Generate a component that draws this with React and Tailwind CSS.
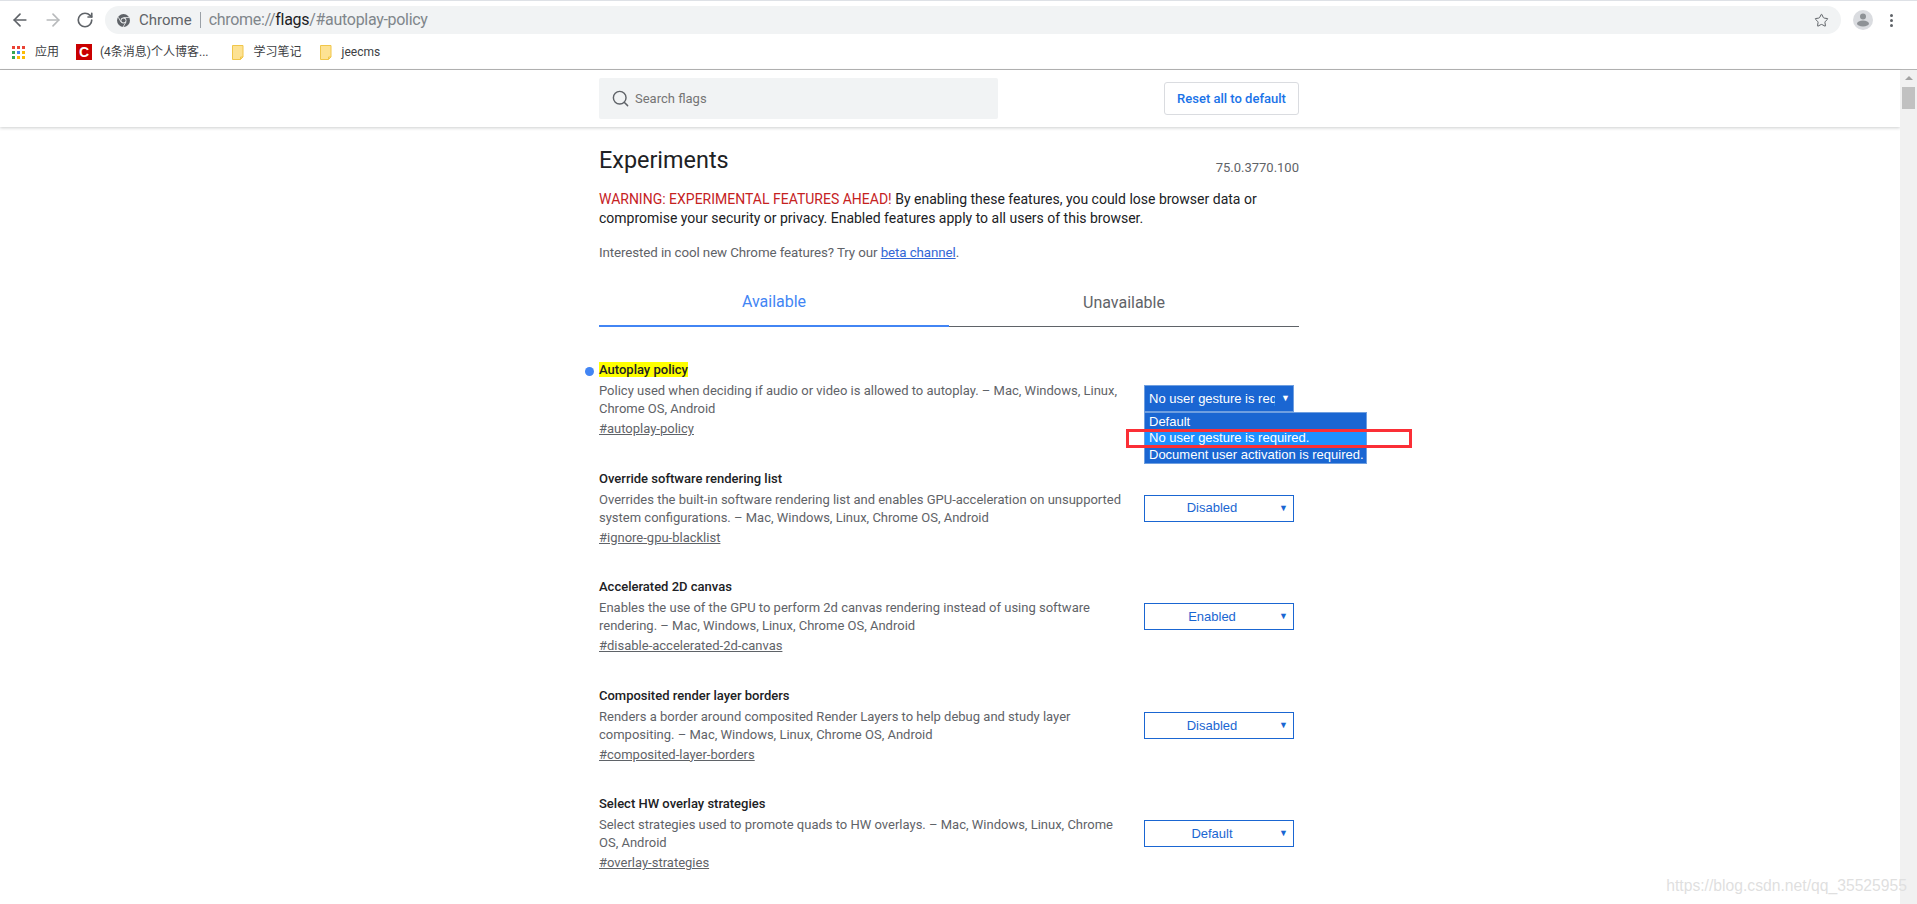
import React from "react";
import { ArrowLeft, ArrowRight, RotateCw, Star, Search } from "lucide-react";

const flags = [
  {
    title: "Autoplay policy",
    active: true,
    desc: ["Policy used when deciding if audio or video is allowed to autoplay. – Mac, Windows, Linux,", "Chrome OS, Android"],
    link: "#autoplay-policy",
    value: "No user gesture is required.",
  },
  {
    title: "Override software rendering list",
    desc: ["Overrides the built-in software rendering list and enables GPU-acceleration on unsupported", "system configurations. – Mac, Windows, Linux, Chrome OS, Android"],
    link: "#ignore-gpu-blacklist",
    value: "Disabled",
  },
  {
    title: "Accelerated 2D canvas",
    desc: ["Enables the use of the GPU to perform 2d canvas rendering instead of using software", "rendering. – Mac, Windows, Linux, Chrome OS, Android"],
    link: "#disable-accelerated-2d-canvas",
    value: "Enabled",
  },
  {
    title: "Composited render layer borders",
    desc: ["Renders a border around composited Render Layers to help debug and study layer", "compositing. – Mac, Windows, Linux, Chrome OS, Android"],
    link: "#composited-layer-borders",
    value: "Disabled",
  },
  {
    title: "Select HW overlay strategies",
    desc: ["Select strategies used to promote quads to HW overlays. – Mac, Windows, Linux, Chrome", "OS, Android"],
    link: "#overlay-strategies",
    value: "Default",
  },
];

function AppsIcon() {
  const colors = ["#ea4335", "#ea4335", "#ea4335", "#34a853", "#4285f4", "#fbbc05", "#34a853", "#fbbc05", "#fbbc05"];
  return (
    <div className="grid grid-cols-3 gap-[2px] w-[13px] h-[13px]">
      {colors.map((c, i) => (
        <span key={i} className="w-[3px] h-[3px]" style={{ background: c }} />
      ))}
    </div>
  );
}

function ChromeIcon() {
  return (
    <svg width="13" height="13" viewBox="0 0 16 16">
      <circle cx="8" cy="8" r="8" fill="#5f6368" />
      <circle cx="8" cy="8" r="3.6" fill="#f1f3f4" />
      <circle cx="8" cy="8" r="2.6" fill="#5f6368" />
      <path d="M8 4.4h7M5 10l-3.4-6M11 10l-3.5 6" stroke="#f1f3f4" strokeWidth="1" />
    </svg>
  );
}

function FolderIcon() {
  return (
    <svg width="12" height="15" viewBox="0 0 12 15">
      <path d="M.5.5h10.5v11.5l-2.5 2.5H.5z" fill="#fde293" stroke="#f0c64a" />
      <path d="M8.5 14.5V12H11" fill="none" stroke="#f0c64a" />
    </svg>
  );
}

function FlagSelect({ value, active }) {
  if (active) {
    return (
      <div className="relative w-[150px] h-[27px] bg-[#1a66d2] border border-[#6f9fe0] flex items-center pl-[4px] text-[13px] text-white font-['Liberation_Sans',sans-serif]">
        <span className="w-[126px] overflow-hidden whitespace-nowrap">{value}</span>
        <span className="ml-[6px] text-[9px]">▼</span>
        <div className="absolute left-[-1px] top-[26px] w-[223px] h-[52px] bg-[#1a66d2] border border-[#6f9fe0] flex flex-col pt-[1px] leading-[16px] whitespace-nowrap">
          <div className="h-[16px] pl-[4px]">Default</div>
          <div className="h-[18px] pl-[4px] bg-[#1e90ff]">No user gesture is required.</div>
          <div className="h-[16px] pl-[4px]">Document user activation is required.</div>
        </div>
        <div className="absolute left-[-19px] top-[43px] w-[286px] h-[19px] border-[3px] border-[#fb2f36]" />
      </div>
    );
  }
  return (
    <div className="relative w-[150px] h-[27px] bg-white border border-[#1a66d2] flex items-center justify-center pr-[14px] text-[13px] text-[#1a66d2] font-['Liberation_Sans',sans-serif]">
      {value}
      <span className="absolute right-[5px] top-[6px] text-[9px]">▼</span>
    </div>
  );
}

function FlagRow({ flag }) {
  return (
    <div className="relative flex justify-between h-[108.6px]">
      {flag.active && <span className="absolute left-[-14px] top-[6px] w-[9px] h-[9px] rounded-full bg-[#4285f4]" />}
      <div className="w-[545px]">
        <div className="h-[18px] leading-[18px] text-[13px] font-medium text-[#202124]">
          <span className={flag.active ? "bg-[#ffff00]" : ""}>{flag.title}</span>
        </div>
        <div className="mt-[3px] text-[13px] leading-[18px] text-[#5f6368] whitespace-nowrap">
          {flag.desc.map((line) => (
            <div key={line}>{line}</div>
          ))}
        </div>
        <div className="mt-[2px] text-[13px] leading-[18px] text-[#5f6368] underline">{flag.link}</div>
      </div>
      <div className={flag.active ? "mr-[5px] mt-[24px]" : "mr-[5px] mt-[25px]"}>
        <FlagSelect value={flag.value} active={flag.active} />
      </div>
    </div>
  );
}

export default function App() {
  return (
    <div className="relative h-screen flex flex-col overflow-hidden bg-white font-['Roboto','Noto_Sans_CJK_SC',sans-serif]">
      {/* browser toolbar */}
      <div className="h-[38px] pt-[5px] border-t border-[#dee1e6] flex items-start text-[#5f6368]">
        <div className="w-[105px] h-[28px] flex items-center pl-[10px] gap-[13px]">
          <ArrowLeft size={20} strokeWidth={2} />
          <ArrowRight size={20} strokeWidth={2} className="text-[#b8babc]" />
          <RotateCw size={18} strokeWidth={2.2} />
        </div>
        <div className="w-[1736px] h-[28px] rounded-full bg-[#f1f3f4] flex items-center pl-[12px] pr-[12px] text-[15px]">
          <ChromeIcon />
          <span className="ml-[9px] text-[#5f6368]">Chrome</span>
          <span className="mx-[8px] h-[16px] w-px bg-[#9aa0a6]" />
          <span className="text-[16px] tracking-[-0.3px] text-[#80868b]">
            chrome://<span className="text-[#202124]">flags</span>/#autoplay-policy
          </span>
          <Star size={15} strokeWidth={1.6} className="ml-auto text-[#5f6368]" />
        </div>
        <div className="flex-1 flex items-center h-[28px] pl-[12px]">
          <svg width="20" height="20" viewBox="0 0 20 20">
            <circle cx="10" cy="10" r="10" fill="#dadce0" />
            <circle cx="10" cy="6.5" r="3" fill="#8e9296" />
            <ellipse cx="10" cy="13.5" rx="6" ry="3" fill="#8e9296" />
          </svg>
          <div className="ml-[17px] flex flex-col gap-[2px]">
            <span className="w-[3px] h-[3px] bg-[#5f6368] rounded-full" />
            <span className="w-[3px] h-[3px] bg-[#5f6368] rounded-full" />
            <span className="w-[3px] h-[3px] bg-[#5f6368] rounded-full" />
          </div>
        </div>
      </div>

      {/* bookmarks bar */}
      <div className="h-[32px] pb-[3px] flex items-center pl-[12px] border-b border-[#b5b5b5] text-[12px] text-[#3c4043]">
        <AppsIcon />
        <span className="ml-[10px]">应用</span>
        <span className="ml-[17px] w-[16px] h-[16px] bg-[#c90000] flex items-center justify-center text-white font-bold text-[14px] leading-none font-['Liberation_Sans',sans-serif]">C</span>
        <span className="ml-[8px]">(4条消息)个人博客...</span>
        <span className="ml-[23px] flex"><FolderIcon /></span>
        <span className="ml-[10px]">学习笔记</span>
        <span className="ml-[18px] flex"><FolderIcon /></span>
        <span className="ml-[10px]">jeecms</span>
      </div>

      <div className="flex-1 flex min-h-0">
        {/* page */}
        <div className="flex-1 min-w-0 flex flex-col">
          <div className="h-[57px] shrink-0 shadow-[0_1px_3px_rgba(60,64,67,0.25)] flex justify-center">
            <div className="w-[700px] ml-[-2px] flex items-start justify-between pt-[8px]">
              <div className="w-[399px] h-[41px] rounded-[2px] bg-[#f1f3f4] flex items-center pl-[12px] text-[13px] text-[#757575]">
                <Search size={19} strokeWidth={1.8} className="text-[#5f6368] mr-[5px]" />
                Search flags
              </div>
              <div className="mt-[4px] w-[135px] h-[33px] rounded-[3px] border border-[#dadce0] flex items-center justify-center text-[13px] font-medium text-[#1a73e8]">
                Reset all to default
              </div>
            </div>
          </div>

          <div className="flex justify-center">
            <div className="w-[700px] ml-[-2px]">
              <div className="flex justify-between items-end mt-[17px] h-[32px]">
                <h1 className="text-[23.4px] leading-[32px] text-[#202124]">Experiments</h1>
                <span className="text-[13px] leading-[18px] text-[#5f6368] mb-[-1px]">75.0.3770.100</span>
              </div>
              <p className="mt-[14px] text-[14px] leading-[19px] text-[#202124] whitespace-nowrap">
                <span className="text-[#c5221f]">WARNING: EXPERIMENTAL FEATURES AHEAD!</span> By enabling these features, you could lose browser data or
                <br />
                compromise your security or privacy. Enabled features apply to all users of this browser.
              </p>
              <p className="mt-[15px] text-[13.35px] tracking-[-0.1px] leading-[19px] text-[#5f6368]">
                Interested in cool new Chrome features? Try our <span className="text-[#3367d6] underline">beta channel</span>.
              </p>

              <div className="mt-[20px] flex h-[45px]">
                <div className="w-1/2 border-b-2 border-[#4285f4] flex items-center justify-center text-[16px] text-[#4285f4] pb-[3px]">Available</div>
                <div className="w-1/2 border-b border-[#5f6368] flex items-center justify-center text-[16px] text-[#5f6368] pb-[2px]">Unavailable</div>
              </div>

              <div className="mt-[34px]">
                {flags.map((f) => (
                  <FlagRow key={f.link} flag={f} />
                ))}
              </div>
            </div>
          </div>
        </div>

        {/* scrollbar */}
        <div className="w-[17px] shrink-0 bg-[#f1f1f1] flex flex-col items-center">
          <span className="mt-[6px] w-0 h-0 border-x-[4px] border-x-transparent border-b-[4px] border-b-[#a3a3a3]" />
          <span className="mt-[7px] w-[13px] h-[22px] bg-[#c1c1c1]" />
        </div>
      </div>

      <div className="absolute right-[10px] bottom-[8px] text-[15.7px] leading-[20px] text-[#dfdfdf] font-['Liberation_Sans',sans-serif]">
        https://blog.csdn.net/qq_35525955
      </div>
    </div>
  );
}
